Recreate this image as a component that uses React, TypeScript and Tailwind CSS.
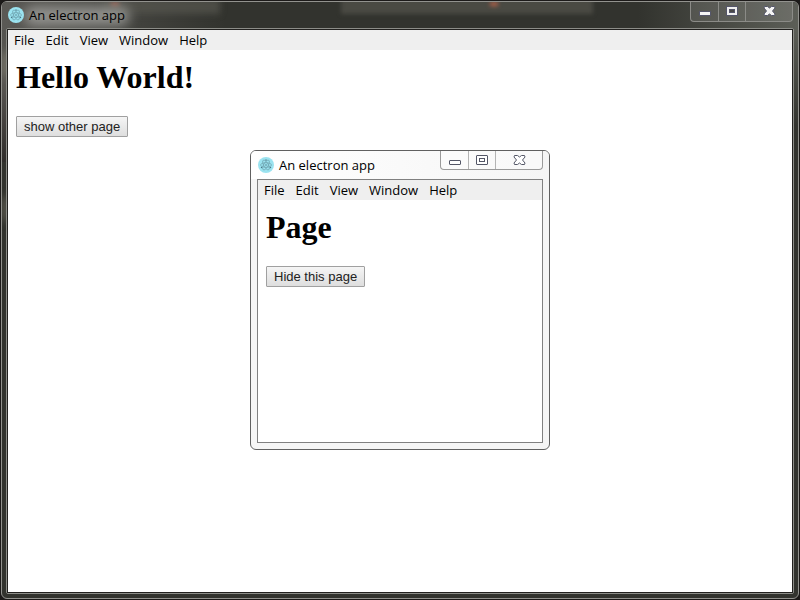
import type { ReactNode } from "react";

const uiFont = "font-['Open_Sans',sans-serif]";

function ElectronIcon() {
  return (
    <svg className="size-4 shrink-0" viewBox="0 0 32 32" aria-hidden="true">
      <circle cx="16" cy="16" r="16" fill="#9be3f0" />
      <g fill="none" stroke="#6898a5" strokeWidth="1.2">
        <ellipse cx="16" cy="16" rx="11" ry="4.500" />
        <ellipse cx="16" cy="16" rx="11" ry="4.500" transform="rotate(60 16 16)" />
        <ellipse cx="16" cy="16" rx="11" ry="4.500" transform="rotate(120 16 16)" />
      </g>
      <g fill="#4b7886">
        <circle cx="16" cy="16" r="1.5" />
        <circle cx="7" cy="21" r="1.4" />
        <circle cx="25" cy="21" r="1.4" />
        <circle cx="16" cy="6" r="1.4" />
      </g>
    </svg>
  );
}

function MinimizeGlyph({ dark }: { dark: boolean }) {
  return dark ? (
    <svg width="12" height="12" viewBox="0 0 12 12" aria-hidden="true">
      <rect x="0.5" y="6.5" width="11" height="4" fill="#f4f4f4" stroke="#55566a" />
    </svg>
  ) : (
    <svg width="12" height="12" viewBox="0 0 12 12" aria-hidden="true">
      <rect x="0.5" y="6.5" width="11" height="4" rx="0.5" fill="#fff" stroke="#535666" />
    </svg>
  );
}

function MaximizeGlyph({ dark }: { dark: boolean }) {
  return dark ? (
    <svg width="12" height="10" viewBox="0 0 12 10" aria-hidden="true">
      <rect x="0.5" y="0.5" width="11" height="9" fill="#f0f0f0" stroke="#55566a" />
      <rect x="3.5" y="3.5" width="5" height="3" fill="#484848" stroke="#55566a" />
    </svg>
  ) : (
    <svg width="12" height="10" viewBox="0 0 12 10" aria-hidden="true">
      <rect x="0.5" y="0.5" width="11" height="9" rx="0.5" fill="#fff" stroke="#535666" />
      <rect x="3.5" y="3.5" width="5" height="3" fill="#fff" stroke="#535666" />
    </svg>
  );
}

function CloseGlyph({ dark }: { dark: boolean }) {
  return (
    <svg width="13" height="10" viewBox="0 0 13 10" aria-hidden="true">
      <path
        d="M1.500.5h3l2 1.500 2-1.500h3l.5 1.500L9.500 5l2.500 3-.5 1.500h-3L6.500 8l-2 1.500h-3L1 8l2.500-3L1 2z"
        fill={dark ? "#f4f4f4" : "#fff"}
        stroke={dark ? "#55566a" : "#535666"}
      />
    </svg>
  );
}

function Controls({ dark }: { dark: boolean }) {
  const tone = dark
    ? "h-[20px] mr-[5px] border-[#8b8b87] divide-[#8b8b87] bg-white/10"
    : "h-[19px] mr-[6px] border-[#9a9a9a] divide-[#b4b4b4] bg-white/40";
  return (
    <div className={`ml-auto flex rounded-b-[4px] border border-t-0 divide-x ${tone}`}>
      <button type="button" aria-label="Minimize" className="flex w-[28px] items-center justify-center pb-px">
        <MinimizeGlyph dark={dark} />
      </button>
      <button type="button" aria-label="Maximize" className="flex w-[27px] items-center justify-center pb-px">
        <MaximizeGlyph dark={dark} />
      </button>
      <button type="button" aria-label="Close" className="flex w-[46px] items-center justify-center pb-px">
        <CloseGlyph dark={dark} />
      </button>
    </div>
  );
}

function MenuBar() {
  return (
    <nav className={`flex h-5 shrink-0 items-center gap-[11px] bg-[#efefef] px-1.5 text-[13px] leading-5 ${uiFont}`}>
      {["File", "Edit", "View", "Window", "Help"].map((item) => (
        <button key={item} type="button">
          {item}
        </button>
      ))}
    </nav>
  );
}

function Page({ title, action }: { title: string; action: string }) {
  return (
    <main className="flex grow flex-col items-start bg-white p-2">
      <h1 className="mb-5 pt-px font-['Liberation_Serif',serif] text-[32px] leading-[37px] font-bold">{title}</h1>
      <button
        type="button"
        className="h-[21px] rounded-[1px] border border-[#a0a0a0] bg-linear-to-b from-[#f5f5f5] to-[#dedede] px-[7px] font-['Liberation_Sans',sans-serif] text-[13px] leading-[19px] text-[#222]"
      >
        {action}
      </button>
    </main>
  );
}

function Backdrop() {
  return (
    <div className="pointer-events-none absolute inset-0 overflow-hidden rounded-[5px]">
      <div className="absolute top-0 left-0 h-40 w-2 bg-linear-to-b from-[#50504c] via-[#5a5854] to-[#302d2b]" />
      <div className="absolute top-[50px] left-0 h-6 w-2 bg-[#77756a] blur-[4px]" />
      <div className="absolute top-[195px] left-0 h-6 w-2 bg-[#5c5a50] blur-[4px]" />
      <div className="absolute top-0 right-0 h-7 w-40 bg-linear-to-r from-transparent to-[#5c5e57]" />
      <div className="absolute top-7 right-0 h-24 w-2 bg-linear-to-b from-[#5c5e57] to-transparent" />
      <div className="absolute top-0 left-0 h-7 w-56 bg-linear-to-r from-[#5a5955] to-transparent" />
      <div className="absolute -top-1 left-[100px] h-4 w-[118px] bg-[#55554f]/70 blur-[3px]" />
      <div className="absolute -top-1 left-[339px] h-[16px] w-[252px] bg-[#4a4a43] blur-[2px]" />
      <div className="absolute top-0 left-[109px] h-1 w-2 bg-[#b45b48]/70 blur-[2px]" />
      <div className="absolute top-0 left-[488px] h-1 w-2 bg-[#d0674a]/80 blur-[2px]" />
      <div className="absolute top-[4px] left-[22px] h-5 w-[106px] rounded-full bg-[#a0a09c]/80 blur-[6px]" />
    </div>
  );
}

function TitleBar({ dark, children }: { dark: boolean; children: ReactNode }) {
  return (
    <header className="flex grow justify-between">
      <div className={`flex items-center gap-[5px] text-[13px] leading-5 ${uiFont} ${dark ? "pl-[6px]" : "pl-[7px]"}`}>
        <ElectronIcon />
        <span>{children}</span>
      </div>
      <Controls dark={dark} />
    </header>
  );
}

export default function App() {
  return (
    <div className="relative flex h-screen flex-col bg-[#1c1a19] p-px text-black">
      <section className="relative flex grow flex-col rounded-[6px] border border-[#92928e] bg-[#32332e] px-1 pb-1">
        <Backdrop />
        <div className="relative -mx-1 flex h-[26px] flex-col">
          <TitleBar dark>An electron app</TitleBar>
        </div>
        <div className="relative flex grow flex-col rounded-[2px] border border-[#8c8d88]">
          <div className="flex grow flex-col border border-[#22211f]">
            <MenuBar />
            <Page title="Hello World!" action="show other page" />
          </div>
        </div>
      </section>

      <section className="absolute inset-0 m-auto flex size-[300px] flex-col rounded-[6px] border border-[#606060] bg-[#f5f5f5] px-[6px] pb-[6px]">
        <div className="-mx-[6px] flex h-[28px] flex-col rounded-t-[5px] bg-linear-to-r from-white to-[#f5f5f5]">
          <TitleBar dark={false}>An electron app</TitleBar>
        </div>
        <div className="flex grow flex-col border border-[#808080]">
          <MenuBar />
          <Page title="Page" action="Hide this page" />
        </div>
      </section>
    </div>
  );
}
